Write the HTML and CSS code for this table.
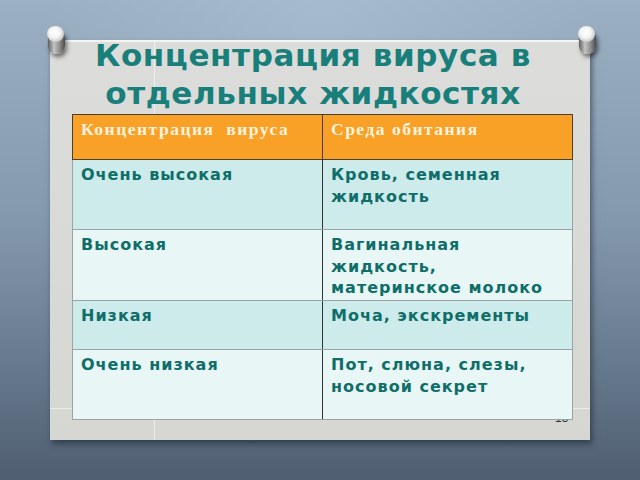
FILE: index.html
```html
<!DOCTYPE html>
<html lang="ru">
<head>
<meta charset="utf-8">
<link rel="stylesheet" href="styles.css">
</head>
<body>
<div class="board">
  <div class="paper">
    <span class="pin pin-left"></span>
    <span class="pin pin-right"></span>
    <span class="fold fold-v"></span>
    <span class="fold fold-h"></span>
    <h1 class="title">Концентрация вируса в<br>отдельных жидкостях</h1>
    <span class="page-num">15</span>
    <table class="grid">
      <tr class="head">
        <th>Концентрация&nbsp; вируса</th>
        <th>Среда обитания</th>
      </tr>
      <tr class="r1 odd">
        <td>Очень высокая</td>
        <td>Кровь, семенная жидкость</td>
      </tr>
      <tr class="r2 even">
        <td>Высокая</td>
        <td>Вагинальная жидкость, материнское молоко</td>
      </tr>
      <tr class="r3 odd">
        <td>Низкая</td>
        <td>Моча, экскременты</td>
      </tr>
      <tr class="r4 even">
        <td>Очень низкая</td>
        <td>Пот, слюна, слезы, носовой секрет</td>
      </tr>
    </table>
  </div>
</div>
</body>
</html>
```

FILE: styles.css
```css
html, body {
  margin: 0;
  padding: 0;
}
.board {
  width: 640px;
  height: 480px;
  overflow: hidden;
  background:
    radial-gradient(ellipse at 50% 0%, rgba(175,195,215,0.55), rgba(175,195,215,0) 60%),
    linear-gradient(180deg, #9cb0c4 0%, #8599ae 45%, #637589 80%, #4f5f70 100%);
  padding-top: 40px;
  box-sizing: border-box;
}
.paper {
  position: relative;
  margin-left: 50px;
  width: 540px;
  height: 400px;
  background: linear-gradient(180deg, #dcdcda 0%, #d6d6d3 100%);
  border-top: 2px solid #f4f4f2;
  box-sizing: border-box;
  box-shadow: 2px 4px 6px rgba(20,30,40,0.55);
}
.fold {
  position: absolute;
  background: rgba(255,255,255,0.55);
}
.fold-v {
  left: 104px;
  top: 0;
  bottom: 0;
  width: 1px;
}
.fold-h {
  left: 0;
  right: 0;
  top: 366px;
  height: 1px;
}
.pin {
  position: absolute;
  width: 17px;
  height: 24px;
  top: -12px;
  border-radius: 8px;
  background: linear-gradient(90deg, #5e5e5e 0%, #c4c4c4 35%, #8a8a8a 70%, #4a4a4a 100%);
  box-shadow: 2px 3px 4px rgba(0,0,0,0.5);
  z-index: 3;
}
.pin::before {
  content: "";
  position: absolute;
  left: -1px;
  top: -4px;
  width: 17px;
  height: 16px;
  border-radius: 50%;
  background: radial-gradient(circle at 45% 40%, #ffffff 0%, #f4f4f4 40%, #c0c0c0 78%, #8a8a8a 100%);
}
.pin-left {
  left: -2px;
}
.pin-right {
  right: -6px;
}
.title {
  margin: -6px 0 0 0;
  padding-right: 14px;
  text-align: center;
  font-family: "DejaVu Sans", sans-serif;
  font-weight: bold;
  font-size: 31px;
  line-height: 38px;
  color: #187f7a;
  letter-spacing: 0.6px;
  position: relative;
  z-index: 2;
}
.page-num {
  position: absolute;
  left: 505px;
  top: 369px;
  font-family: "Liberation Sans", sans-serif;
  font-size: 12px;
  color: #333;
  z-index: 0;
}
.grid {
  position: relative;
  z-index: 1;
  margin-left: 22px;
  margin-top: 2px;
  width: 500px;
  border-collapse: collapse;
  table-layout: fixed;
}
.grid th, .grid td {
  width: 250px;
  vertical-align: top;
  text-align: left;
  padding: 6px 8px 0 8px;
  box-sizing: border-box;
}
.grid th {
  height: 45px;
  background: #f9a026;
  color: #fff3df;
  font-family: "Liberation Serif", serif;
  font-weight: bold;
  font-size: 17.5px;
  line-height: 20px;
  letter-spacing: 1.5px;
  border: 1px solid #4a3e2e;
  padding-top: 4px;
}
.grid td {
  font-family: "DejaVu Sans", sans-serif;
  font-weight: bold;
  font-size: 16px;
  line-height: 21.5px;
  letter-spacing: 1px;
  color: #0f6e69;
  border: 1px solid #9aa3a3;
  padding-top: 4px;
}
.grid td:first-child {
  border-right: 1px solid #2e3434;
}
.grid .odd td {
  background: #cdebea;
}
.grid .even td {
  background: #e8f6f6;
}
.r1 td { height: 70px; }
.r2 td { height: 71px; }
.r3 td { height: 49px; }
.r4 td { height: 70px; }
```
